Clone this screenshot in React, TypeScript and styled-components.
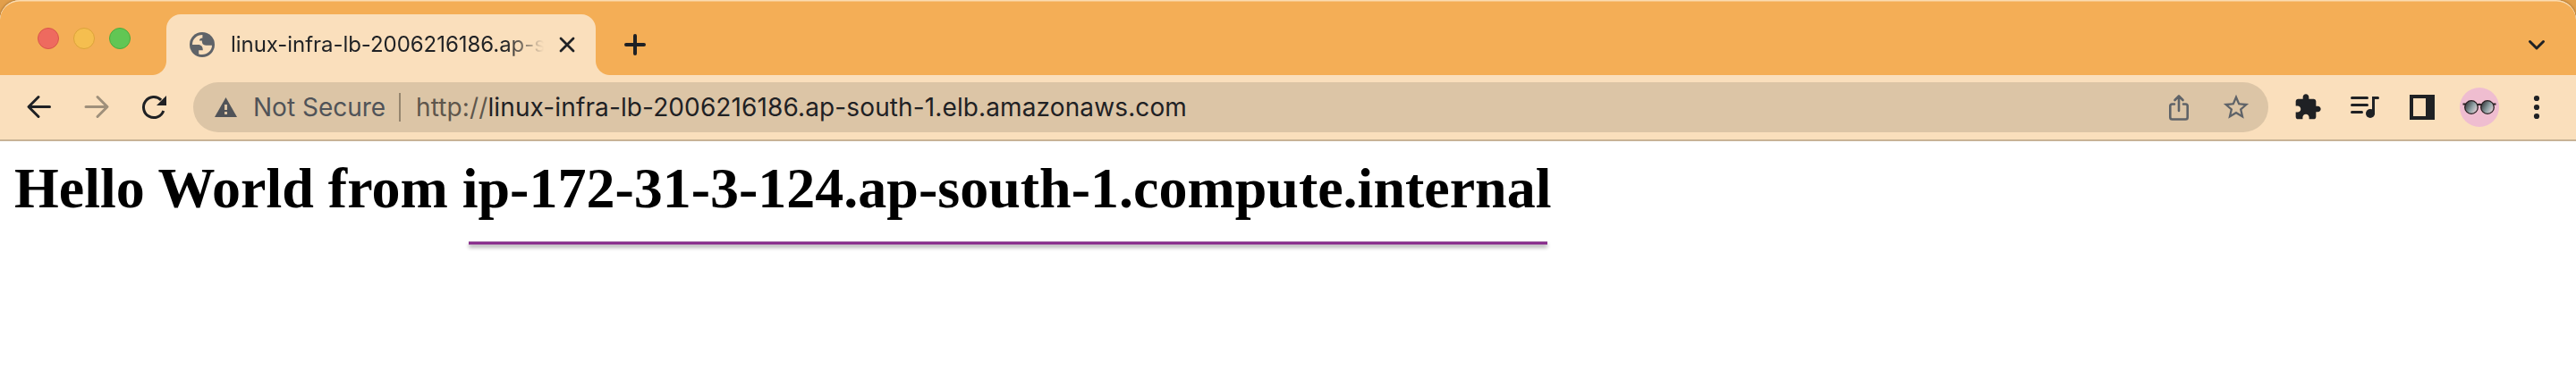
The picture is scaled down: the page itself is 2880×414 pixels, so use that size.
import React from "react";
import styled, { createGlobalStyle } from "styled-components";

const ink = "#1f2124";
const grey = "#5f6368";
const cream = "#fadfbc";
const frame = "#f4ae56";

const GlobalStyle = createGlobalStyle`
  * { box-sizing: border-box; }
  body { margin: 0; background: #fff; }
  svg { display: block; flex: none; overflow: visible; }
`;

const Desktop = styled.div`
  width: 2880px;
  height: 414px;
  background: #e29f4b;
  overflow: hidden;
`;

const Window = styled.div`
  width: 100%;
  height: 100%;
  display: flex;
  flex-direction: column;
  background: #fff;
  border-radius: 22px 22px 0 0;
  overflow: hidden;
  box-shadow: 0 0 3px rgba(90, 50, 0, 0.7);
`;

const TabStrip = styled.div`
  height: 84px;
  flex: none;
  display: flex;
  align-items: flex-end;
  background: ${frame};
  border-radius: 22px 22px 0 0;
  box-shadow: inset 0 2px 0 -0.5px #fbdcb0;
`;

const WindowControls = styled.div`
  width: 186px;
  height: 82px;
  padding: 0 0 0 42px;
  display: flex;
  align-items: center;
  gap: 16px;
`;

const Light = styled.span<{ $fill: string; $edge: string }>`
  width: 24px;
  height: 24px;
  border-radius: 50%;
  background: ${(p) => p.$fill};
  border: 1px solid ${(p) => p.$edge};
`;

const Tab = styled.div`
  position: relative;
  width: 480px;
  height: 68px;
  padding: 0 22px 0 26px;
  display: flex;
  align-items: center;
  background: ${cream};
  border-radius: 16px 16px 0 0;

  &::before,
  &::after {
    content: "";
    position: absolute;
    bottom: 0;
    width: 16px;
    height: 16px;
  }
  &::before {
    left: -16px;
    background: radial-gradient(circle at 0 0, transparent 15.5px, ${cream} 16.5px);
  }
  &::after {
    right: -16px;
    background: radial-gradient(circle at 100% 0, transparent 15.5px, ${cream} 16.5px);
  }
`;

const TabTitle = styled.span`
  width: 350px;
  margin: 0 16px 0 18px;
  overflow: hidden;
  white-space: nowrap;
  font: 400 24px/34px Inter, "Liberation Sans", sans-serif;
  letter-spacing: -0.05px;
  color: ${ink};
  mask-image: linear-gradient(to right, #000 308px, transparent 350px);
`;

const NewTab = styled.div`
  height: 68px;
  margin-left: 32px;
  flex: 1;
  display: flex;
  align-items: center;
`;

const TabSearch = styled.div`
  height: 68px;
  padding-right: 35px;
  display: flex;
  align-items: center;
`;

const Toolbar = styled.div`
  height: 74px;
  flex: none;
  display: flex;
  align-items: center;
  background: ${cream};
  border-bottom: 2px solid #c8b396;
`;

const Navigation = styled.div`
  width: 216px;
  padding-left: 24px;
  display: flex;
  gap: 24px;
`;

const AddressBar = styled.div`
  width: 2320px;
  height: 56px;
  padding: 0 19px 0 24px;
  display: flex;
  align-items: center;
  border-radius: 28px;
  background: #dcc5a6;
  font: 400 28px/40px Inter, "Liberation Sans", sans-serif;
  color: ${ink};
  white-space: nowrap;
`;

const Security = styled.span`
  width: 163px;
  margin-left: 18px;
  color: #505358;
`;

const Divider = styled.span`
  width: 2px;
  height: 32px;
  margin-right: 17px;
  background: #95856f;
`;

const Address = styled.span`
  flex: 1;
  letter-spacing: 0.12px;
`;

const Scheme = styled.span`
  color: #5e564c;
`;

const PageActions = styled.div`
  display: flex;
  align-items: center;
  gap: 31px;
`;

const Extensions = styled.div`
  padding-left: 28px;
  display: flex;
  align-items: center;
`;

const ToolSlot = styled.span<{ $gap: number }>`
  margin-right: ${(p) => p.$gap}px;
`;

const Page = styled.main`
  padding: 16px;
  color: #000;
`;

const Heading = styled.h1`
  margin: 0;
  font: 700 64px/74px "Liberation Serif", "Times New Roman", serif;
  white-space: nowrap;
`;

const Underline = styled.div`
  width: 1206px;
  height: 4px;
  margin: 22px 0 0 508px;
  background: #86288a;
  border: solid #a66fa8;
  border-width: 1px 0;
  box-shadow: 0 3px 4px rgba(0, 0, 0, 0.32);
`;

const Glyph = ({ size = 40, color = ink, d }: { size?: number; color?: string; d: string }) => (
  <svg width={size} height={size} viewBox="0 0 24 24" fill={color}>
    <path d={d} />
  </svg>
);

const Stroked = ({ size = 40, color = ink, width = 3, d }: { size?: number; color?: string; width?: number; d: string }) => (
  <svg width={size} height={size} viewBox={`0 0 ${size} ${size}`} fill="none" stroke={color} strokeWidth={width} strokeLinecap="round" strokeLinejoin="round">
    <path d={d} />
  </svg>
);

const Globe = () => (
  <svg width="28" height="28" viewBox="0 0 28 28">
    <circle cx="14" cy="14" r="14" fill={grey} />
    <path fill={cream} d="M3 14C3 7.800 8 3.100 14.400 3.100V6.600C12 6.800 11 7.800 10.900 9.600H13.800C13.800 12.600 15 14.800 18.200 14.800H25C25 22 17.600 26.600 10.200 24.400V20.200H14.800C14.800 16.200 13 14.100 9.400 14.100Z" />
  </svg>
);

const Avatar = () => (
  <svg width="44" height="44" viewBox="0 0 44 44">
    <defs>
      <linearGradient id="lens" x1="0" y1="0.2" x2="1" y2="0.8">
        <stop offset="0.1" stopColor="#41464a" />
        <stop offset="0.55" stopColor="#91a3a6" />
        <stop offset="1" stopColor="#f1d6dd" />
      </linearGradient>
    </defs>
    <circle cx="22" cy="22" r="22" fill="#efbdd0" />
    <path d="M3.500 18.500h4M36.500 18.500h4M19.500 19.500q2.500-1.500 5 0" stroke="#2a2023" strokeWidth="2" fill="none" />
    <circle cx="13" cy="22" r="7.300" fill="url(#lens)" stroke="#2a2023" strokeWidth="1.300" />
    <circle cx="31" cy="22" r="7.300" fill="url(#lens)" stroke="#2a2023" strokeWidth="1.300" />
  </svg>
);

export default function App() {
  return (
    <Desktop>
      <GlobalStyle />
      <Window>
        <TabStrip>
          <WindowControls>
            <Light $fill="#ee6a5f" $edge="#d9554a" />
            <Light $fill="#f5be4f" $edge="#dca33a" />
            <Light $fill="#61c654" $edge="#4cab3e" />
          </WindowControls>
          <Tab>
            <Globe />
            <TabTitle>linux-infra-lb-2006216186.ap-south-1</TabTitle>
            <Stroked size={20} width={2.8} d="M3 3 17 17M17 3 3 17" />
          </Tab>
          <NewTab>
            <Stroked size={24} width={4} d="M12 2V22M2 12H22" />
          </NewTab>
          <TabSearch>
            <Stroked size={18} width={3} d="M1.500 5.500 9 13 16.500 5.500" />
          </TabSearch>
        </TabStrip>
        <Toolbar>
          <Navigation>
            <Stroked d="M31.500 19.500H9M19 8.500 8 19.500 19 30.500" />
            <Stroked color="#9f907b" d="M8 19.500H31M21 8.500 32 19.500 21 30.500" />
            <svg width="40" height="40" viewBox="0 0 40 40">
              <path d="M28.100 11.900A11.500 11.500 0 1 0 30.800 24" fill="none" stroke={ink} strokeWidth="3" />
              <path d="M34 7V18H23Z" fill={ink} />
            </svg>
          </Navigation>
          <AddressBar>
            <svg width="25" height="22" viewBox="0 0 25 22">
              <path d="M12.500 0 25 22H0Z" fill="#505358" />
              <path d="M11 8h3v6h-3zM11 16h3v3h-3z" fill="#dcc5a6" />
            </svg>
            <Security>Not Secure</Security>
            <Divider />
            <Address>
              <Scheme>http://</Scheme>linux-infra-lb-2006216186.ap-south-1.elb.amazonaws.com
            </Address>
            <PageActions>
              <Stroked size={32} width={2.6} color={grey} d="M11 12.500H8.500Q6.300 12.500 6.300 14.700V27.300Q6.300 29.500 8.500 29.500H23.500Q25.700 29.500 25.700 27.300V14.700Q25.700 12.500 23.500 12.500H21M16 20V4M11.500 8 16 3.500 20.500 8" />
              <Glyph size={34} color={grey} d="M22 9.240l-7.190-.62L12 2 9.190 8.630 2 9.240l5.460 4.730L5.820 21 12 17.270 18.180 21l-1.630-7.030L22 9.240zM12 15.400l-3.760 2.270 1-4.280-3.320-2.880 4.380-.38L12 6.100l1.710 4.040 4.380.38-3.320 2.880 1 4.280L12 15.400z" />
            </PageActions>
          </AddressBar>
          <Extensions>
            <ToolSlot $gap={32}>
              <Glyph size={32} d="M20.5 11H19V7c0-1.100-.9-2-2-2h-4V3.500C13 2.120 11.880 1 10.500 1S8 2.120 8 3.500V5H4c-1.100 0-1.990.9-1.990 2v3.800H3.500c1.490 0 2.700 1.210 2.700 2.700s-1.210 2.700-2.700 2.700H2V20c0 1.100.9 2 2 2h3.800v-1.500c0-1.490 1.210-2.700 2.700-2.700 1.490 0 2.700 1.210 2.700 2.700V22H17c1.100 0 2-.9 2-2v-4h1.500c1.380 0 2.500-1.120 2.500-2.500S21.880 11 20.500 11z" />
            </ToolSlot>
            <ToolSlot $gap={34}>
              <svg width="32" height="28" viewBox="0 0 32 28">
                <path d="M1.500 3.500H18.500M1.500 11.500H18.500M1.500 19.500H12.500M25.500 21V3.500H30.500" fill="none" stroke={ink} strokeWidth="3" strokeLinecap="round" />
                <circle cx="22" cy="21" r="5" fill={ink} />
              </svg>
            </ToolSlot>
            <ToolSlot $gap={28}>
              <svg width="28" height="28" viewBox="0 0 28 28">
                <path fillRule="evenodd" d="M0 0H28V28H0ZM4 4V24H18V4Z" fill={ink} />
              </svg>
            </ToolSlot>
            <ToolSlot $gap={38}>
              <Avatar />
            </ToolSlot>
            <svg width="8" height="28" viewBox="0 0 8 28" fill={ink}>
              <circle cx="4" cy="4" r="3.100" />
              <circle cx="4" cy="14" r="3.100" />
              <circle cx="4" cy="24" r="3.100" />
            </svg>
          </Extensions>
        </Toolbar>
        <Page>
          <Heading>Hello World from ip-172-31-3-124.ap-south-1.compute.internal</Heading>
          <Underline />
        </Page>
      </Window>
    </Desktop>
  );
}
